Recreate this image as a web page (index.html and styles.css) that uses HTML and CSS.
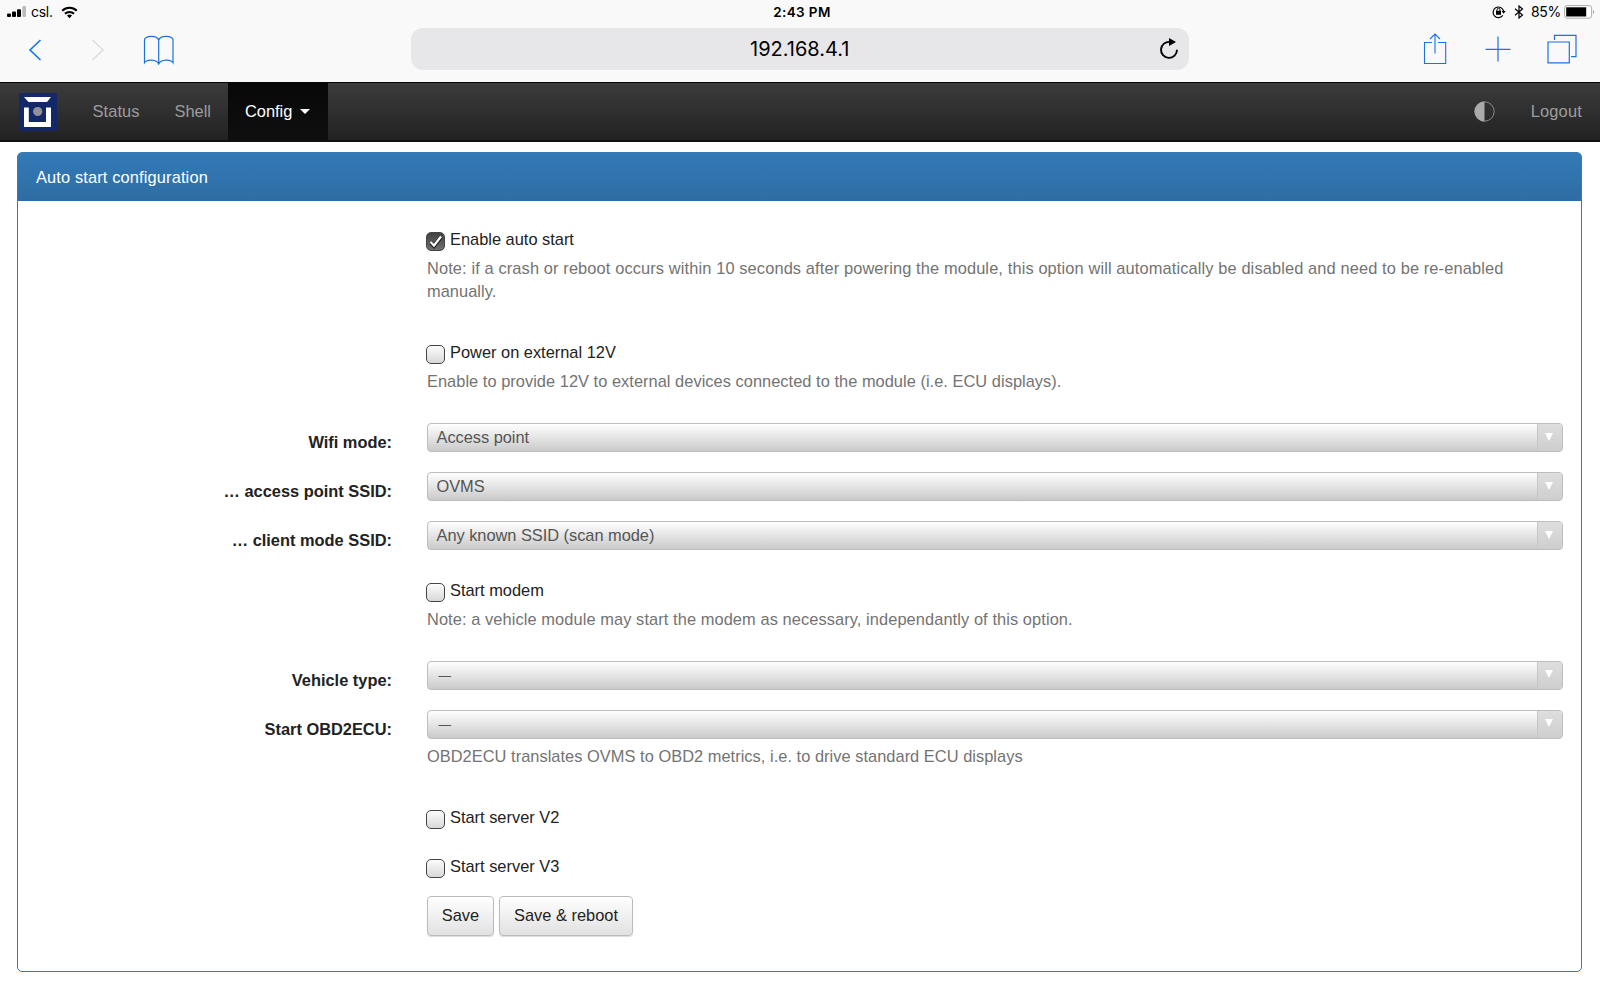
FILE: index.html
```
<!DOCTYPE html>
<html lang="en">
<head>
<meta charset="utf-8">
<title>Auto start configuration</title>
<link rel="stylesheet" href="styles.css">
</head>
<body>
<div class="browser">
  <div class="status">
    <div class="status-left">
      <svg width="20" height="12" viewBox="0 0 20 12"><rect x="0" y="7.5" width="4" height="3.5" rx="1"/><rect x="5" y="5.5" width="4" height="5.5" rx="1"/><rect x="10" y="3.2" width="4" height="7.8" rx="1"/><rect x="15.3" y="0" width="3.7" height="11" rx="1" fill="#bbb"/></svg>
      <span class="carrier">csl.</span>
      <svg width="17" height="13" viewBox="0 0 18 13"><g fill="none" stroke="#000" stroke-width="2.2"><path d="M1.3 4.7A11 11 0 0 1 16.7 4.7"/><path d="M4.2 7.9A6.8 6.8 0 0 1 13.8 7.9"/></g><path d="M9 12.6L6.3 9.8A4 4 0 0 1 11.7 9.8Z"/></svg>
    </div>
    <span class="clock">2:43 PM</span>
    <div class="status-right">
      <svg width="14" height="14" viewBox="0 0 14 14"><path d="M10.8 10.3A5.3 5.3 0 1 1 11.6 6.2" fill="none" stroke="#000" stroke-width="1.2"/><path d="M9.6 6.1H13.6L11.6 8.8Z"/><rect x="4" y="5.8" width="5" height="4"/><path d="M5 6V4.8a1.5 1.5 0 0 1 3 0V6" fill="none" stroke="#000"/></svg>
      <svg class="bt" width="10" height="14" viewBox="0 0 10 14"><path d="M1 3.7L8.5 10L5 13V1L8.5 4L1 10.2" fill="none" stroke="#000" stroke-width="1.2"/></svg>
      <span class="pct">85%</span>
      <svg width="31" height="14" viewBox="0 0 31 14"><rect x=".6" y=".6" width="27" height="12.6" rx="2.5" fill="#fff" stroke="#aaa"/><rect x="2.2" y="2.3" width="20" height="9.2"/><path d="M29.2 4.5q2 2.3 0 4.8z" fill="#999"/></svg>
    </div>
  </div>
  <div class="toolbar">
    <div class="tools-left">
      <svg width="14" height="24" viewBox="0 0 14 24"><path d="M12.5 2L2 12L12.5 22" fill="none" stroke="#1473e6" stroke-width="1.6"/></svg>
      <svg width="14" height="24" viewBox="0 0 14 24"><path d="M1.5 2L12 12L1.5 22" fill="none" stroke="#dcdcdc" stroke-width="1.4"/></svg>
      <svg width="32" height="30" viewBox="0 0 32 30"><path d="M15.7 29V5C14 .2 3 .2 1.5 4.5V27.7C4 24 13.5 24 15.7 29C18 24 27.5 24 30 27.7V4.5C28.5 .2 17.4 .2 15.7 5" fill="none" stroke="#1b72d8" stroke-width="1.2"/></svg>
    </div>
    <div class="address">
      <span class="url">192.168.4.1</span>
      <svg class="reload" width="20" height="23" viewBox="0 0 20 23"><path d="M11 3.9A8 8 0 1 0 18 11.8" fill="none" stroke="#000" stroke-width="1.9"/><path d="M10 0L17 4.1L10 8Z"/></svg>
    </div>
    <div class="tools-right">
      <svg width="24" height="32" viewBox="0 0 24 32"><path d="M9 9.5H1.5V30.5H22.7V9.5H15M12 20.5V1.2M7 6L12 1L17 6" fill="none" stroke="#1b72e0" stroke-width="1.1"/></svg>
      <svg width="26" height="26" viewBox="0 0 26 26"><path d="M13 .5V25.5M.5 13.3H25.5" fill="none" stroke="#1b72e0" stroke-width="1.2"/></svg>
      <svg width="30" height="30" viewBox="0 0 30 30"><path d="M1 8H22.3V28.8H1ZM7.5 6V1.3H29V22.7H24" fill="none" stroke="#1b72e0" stroke-width="1.2"/></svg>
    </div>
  </div>
</div>
<nav class="navbar">
  <svg class="logo" width="38" height="38" viewBox="0 0 38 38"><rect width="38" height="38" rx="3" fill="#122869"/><path d="M5 4H32L28 9H9.500Z" fill="#fff"/><path d="M5 14.500H9.800V29H27V14.500H32V34H5Z" fill="#fff"/><circle cx="18.700" cy="18.500" r="4.600" fill="#949099"/></svg>
  <a class="link status-link">Status</a>
  <a class="link shell-link">Shell</a>
  <a class="link active">Config<span class="caret"></span></a>
  <svg class="contrast" width="21" height="21" viewBox="0 0 21 21"><circle cx="10.500" cy="10.500" r="9.700" fill="none" stroke="#888"/><path d="M10.500 .5A10 10 0 0 0 10.500 20.500Z" fill="#aaa"/></svg>
  <a class="link logout">Logout</a>
</nav>
<main class="panel">
  <header class="panel-head"><span class="title">Auto start configuration</span></header>
  <form class="form">
    <div class="row r-auto"><div class="field">
      <label class="check"><span class="box checked"><svg width="17" height="17" viewBox="0 0 17 17"><path d="M3.500 9.500L7 13L14 4" fill="none" stroke="#222" stroke-width="4"/><path d="M3.500 9L7 12.500L14 3.500" fill="none" stroke="#fff" stroke-width="2.200"/></svg></span><span>Enable auto start</span></label>
      <p class="help"><span class="h-auto">Note: if a crash or reboot occurs within 10 seconds after powering the module, this option will automatically be disabled and need to be re-enabled</span><br>manually.</p>
    </div></div>
    <div class="row r-power"><div class="field">
      <label class="check"><span class="box"></span><span>Power on external 12V</span></label>
      <p class="help">Enable to provide 12V to external devices connected to the module (i.e. ECU displays).</p>
    </div></div>
    <div class="row r-select"><span class="label">Wifi mode:</span><div class="field"><div class="select"><span>Access point</span><i class="drop"></i></div></div></div>
    <div class="row r-select"><span class="label">… access point SSID:</span><div class="field"><div class="select"><span>OVMS</span><i class="drop"></i></div></div></div>
    <div class="row r-select"><span class="label">… client mode SSID:</span><div class="field"><div class="select"><span>Any known SSID (scan mode)</span><i class="drop"></i></div></div></div>
    <div class="row r-modem"><div class="field">
      <label class="check"><span class="box"></span><span>Start modem</span></label>
      <p class="help h-modem">Note: a vehicle module may start the modem as necessary, independantly of this option.</p>
    </div></div>
    <div class="row r-select"><span class="label">Vehicle type:</span><div class="field"><div class="select dash"><span>—</span><i class="drop"></i></div></div></div>
    <div class="row r-obd"><span class="label">Start OBD2ECU:</span><div class="field"><div class="select dash"><span>—</span><i class="drop"></i></div>
      <p class="help">OBD2ECU translates OVMS to OBD2 metrics, i.e. to drive standard ECU displays</p></div></div>
    <div class="row r-check"><div class="field"><label class="check"><span class="box"></span><span>Start server V2</span></label></div></div>
    <div class="row r-last"><div class="field"><label class="check"><span class="box"></span><span>Start server V3</span></label></div></div>
    <div class="row"><div class="field buttons"><button type="button" class="btn save">Save</button><button type="button" class="btn reboot">Save &amp; reboot</button></div></div>
  </form>
</main>
</body>
</html>
```
FILE: styles.css
```
* { box-sizing: border-box; }
body {
  margin: 0;
  height: 993px;
  overflow: hidden;
  background: #fff;
  color: #222;
  font: 16.4px/23px "Liberation Sans", Arial, sans-serif;
}
svg { display: block; flex: none; }

.browser { height: 82px; background: #f9f9f9; color: #000; }
.status {
  display: grid;
  grid-template-columns: 1fr auto 1fr;
  height: 24px;
  padding: 0 7px;
  align-items: center;
  font: 14px/24px Inter, sans-serif;
}
.status-left, .status-right { display: flex; align-items: center; }
.status-right { justify-content: flex-end; margin-right: -2px; }
.carrier { margin: 0 8px 0 4px; font-size: 14px; letter-spacing: -.3px; }
.clock { font-weight: 600; font-size: 13.5px; letter-spacing: .4px; margin-left: 4px; }
.bt { margin: 0 7px 0 8px; }
.pct { margin-right: 3px; letter-spacing: -.3px; }
.toolbar {
  display: grid;
  grid-template-columns: 411px 778px 411px;
  height: 58px;
  padding-top: 4px;
}
.tools-left, .tools-right { display: flex; height: 42px; align-items: center; }
.tools-left { padding: 2px 0 0 28px; gap: 49px; }
.tools-left svg:nth-child(3) { margin-left: -11px; }
.tools-right { padding-left: 234px; gap: 38px; }
.tools-right svg:nth-child(3) { margin-left: -2px; }
.address {
  display: flex;
  align-items: center;
  height: 42px;
  padding: 1px 10px 0 339px;
  border-radius: 12px;
  background: #e7e7e9;
  font: 20px/41px Inter, sans-serif;
}
.reload { margin-left: auto; }

.navbar {
  display: flex;
  align-items: center;
  height: 60px;
  padding: 0 18px 0 19px;
  border-top: 1px solid #080808;
  border-bottom: 2px solid #111;
  background: linear-gradient(#3c3c3c, #222);
}
.link { color: #9d9d9d; }
.status-link { margin-left: 35.5px; width: 82px; letter-spacing: .1px; }
.shell-link { width: 53.5px; }
.active {
  display: flex;
  align-items: center;
  align-self: stretch;
  width: 100px;
  padding-left: 17px;
  background: linear-gradient(#080808, #0f0f0f);
  color: #fff;
}
.caret { margin-left: 8px; border: 5px solid transparent; border-top-color: #fff; border-bottom: 0; }
.contrast { margin-left: auto; }
.logout { margin-left: 36px; letter-spacing: .2px; }

.panel {
  height: 820px;
  margin: 10px 18px 0 17px;
  border: 1px solid #337ab7;
  border-radius: 5px;
}
.panel-head {
  height: 48px;
  padding: 13px 18px 0;
  border-radius: 3px 3px 0 0;
  background: linear-gradient(#337ab7, #2e6da4);
  color: #fff;
}
.title { letter-spacing: .14px; }
.form { padding: 27px 18px 0 0; }
.row { display: grid; grid-template-columns: 374px 1fr; column-gap: 35px; }
.field { grid-column: 2; }
.label { padding-top: 8px; text-align: right; font-weight: bold; }
.check { display: flex; height: 23px; }
.box {
  width: 19px;
  height: 19px;
  margin: 4px 5px 0 -1px;
  border: 1px solid #444;
  border-radius: 5px;
  background: linear-gradient(#fcfcfc, #d8d8d8);
}
.checked { background: linear-gradient(#414141, #707070); }
.help { margin: 6px 0 0; color: #737373; line-height: 23.4px; letter-spacing: .035px; }
.h-auto { letter-spacing: .12px; }
.h-modem { letter-spacing: .085px; }
.r-auto { height: 113px; }
.r-power { height: 82px; }
.r-select { height: 49px; }
.r-modem { height: 90.5px; padding-top: 9px; }
.r-obd { height: 96.5px; }
.r-check { height: 49px; }
.r-last { height: 41px; }
.select {
  display: flex;
  justify-content: space-between;
  height: 29px;
  padding-left: 8.5px;
  border: 1px solid #bdbdbd;
  border-radius: 4px;
  background: linear-gradient(#fff, #cacaca);
  color: #555;
  line-height: 27px;
  letter-spacing: -.03px;
}
.dash span { padding-left: 2px; font-size: 12.5px; line-height: 29px; }
.drop {
  display: grid;
  place-items: center;
  width: 25px;
  padding: 0 3px 2px 0;
  border-left: 1px solid #c6c6c6;
  border-radius: 0 3px 3px 0;
  background: linear-gradient(#dedede, #cecece);
}
.drop::after { content: ""; border: 4.500px solid transparent; border-top: 8px solid #fff; border-bottom: 0; }
.buttons { display: flex; gap: 5px; }
.btn {
  height: 40px;
  padding: 0 0 1px;
  border: 1px solid #bbb;
  border-radius: 4px;
  background: linear-gradient(#fff, #e1e1e1);
  box-shadow: 0 1px 1px #ddd;
  color: #222;
  font: inherit;
}
.save { width: 67px; }
.reboot { width: 134px; }
```
